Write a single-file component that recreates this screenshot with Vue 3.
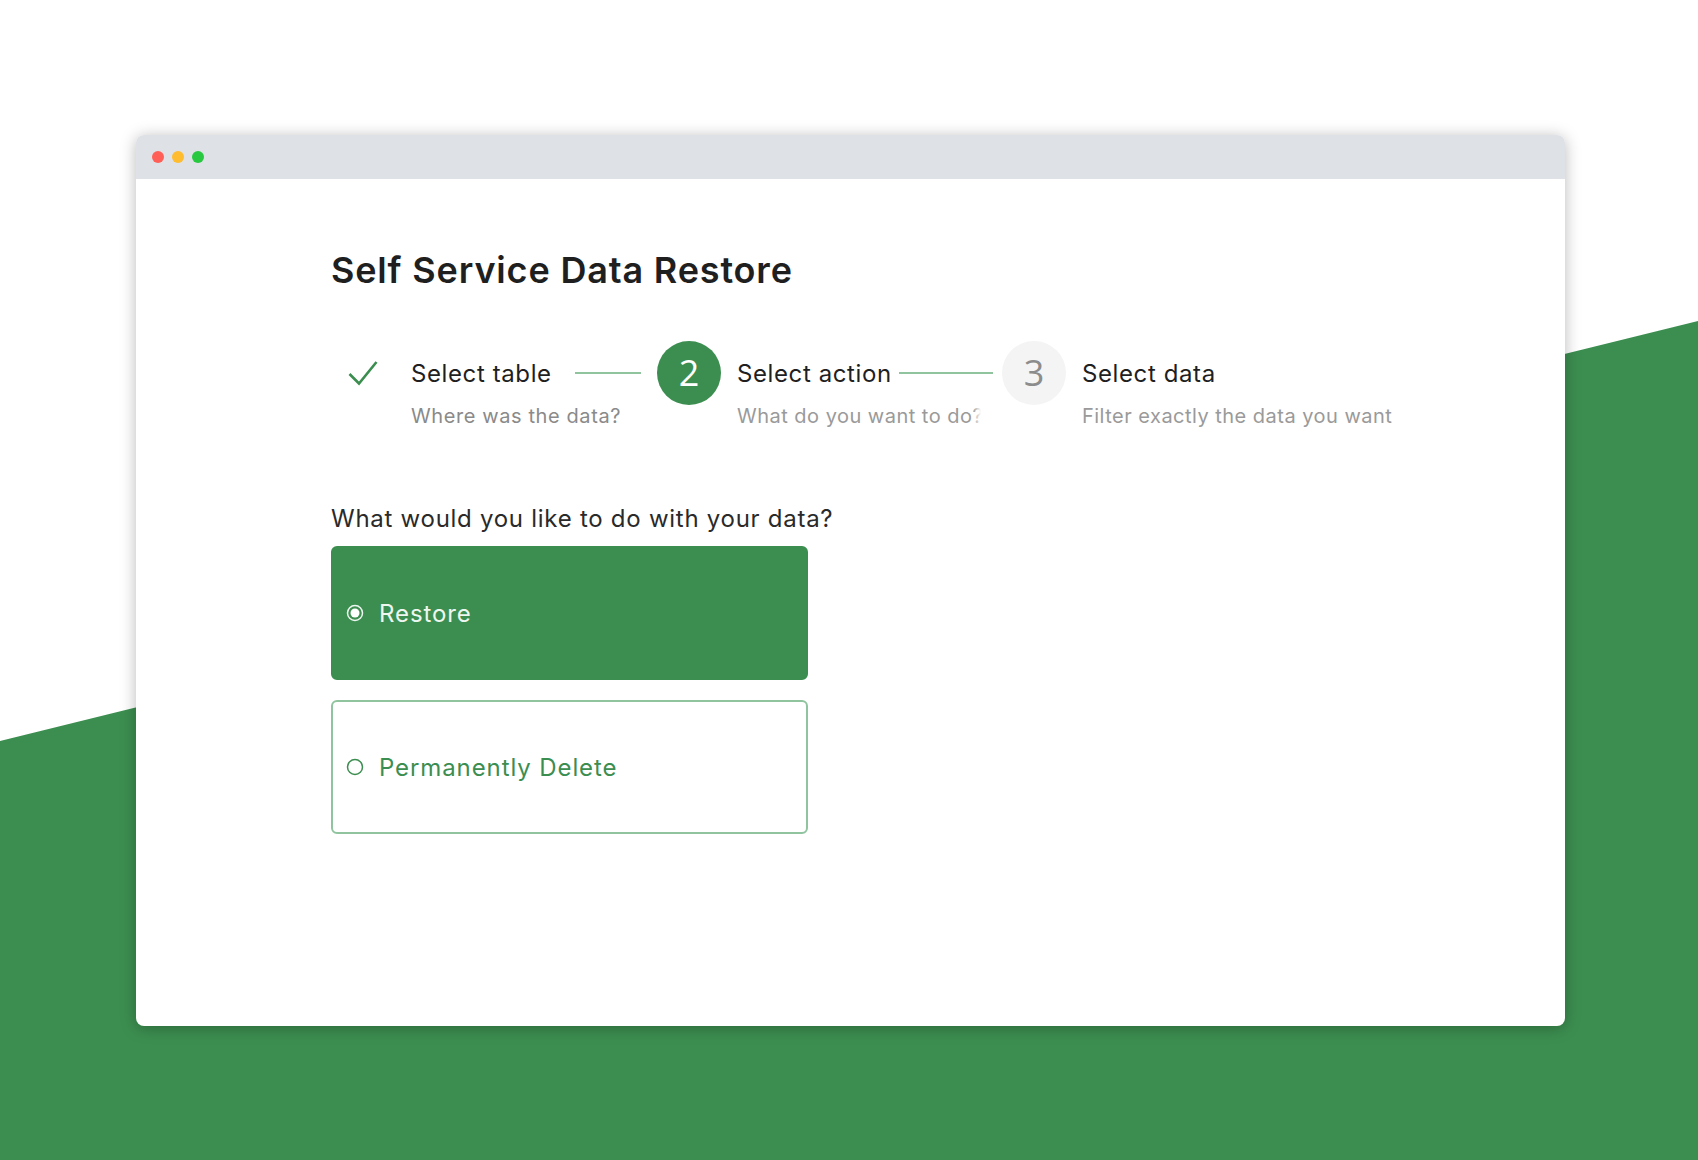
<template>
  <div class="page">
    <div class="bg-shape"></div>

    <div class="window">
      <div class="titlebar">
        <span class="dot red"></span>
        <span class="dot yellow"></span>
        <span class="dot green"></span>
      </div>

      <div class="content">
        <h1 class="title">Self Service Data Restore</h1>

        <div class="steps">
          <div v-for="step in steps" :key="step.title" class="step" :class="step.cls">
            <div class="step-icon">
              <svg v-if="step.done" width="30" height="26" viewBox="0 0 30 26" fill="none">
                <path d="M1.5 14L11 23.5L28.5 2" stroke="#3c8e50" stroke-width="2.6" />
              </svg>
              <span v-else class="step-num">{{ step.num }}</span>
            </div>
            <div class="step-body">
              <div class="step-head">
                <span class="step-title">{{ step.title }}</span>
                <span v-if="step.line" class="step-line"></span>
              </div>
              <div class="step-sub">{{ step.sub }}</div>
            </div>
          </div>
        </div>

        <p class="question">What would you like to do with your data?</p>

        <div class="options">
          <label
            v-for="opt in options"
            :key="opt.value"
            class="option"
            :class="{ selected: selected === opt.value }"
            @click="selected = opt.value"
          >
            <svg class="radio" width="18" height="18" viewBox="0 0 18 18" fill="none">
              <circle cx="9" cy="9" r="7.5" stroke="currentColor" stroke-width="1.5" />
              <circle v-if="selected === opt.value" cx="9" cy="9" r="4.5" fill="#fff" />
            </svg>
            <span class="option-label">{{ opt.label }}</span>
          </label>
        </div>
      </div>
    </div>
  </div>
</template>

<script setup>
import { ref } from "vue";

const steps = [
  { cls: "is-done", done: true, title: "Select table", sub: "Where was the data?", line: true },
  { cls: "is-active", num: 2, title: "Select action", sub: "What do you want to do?", line: true },
  { cls: "is-todo", num: 3, title: "Select data", sub: "Filter exactly the data you want", line: false },
];

const options = [
  { value: "restore", label: "Restore" },
  { value: "delete", label: "Permanently Delete" },
];

const selected = ref("restore");
</script>

<style scoped>
.page {
  position: relative;
  width: 1698px;
  height: 1160px;
  padding: 135px 133px 0 136px;
  box-sizing: border-box;
  overflow: hidden;
  background: #fff;
  font-family: Inter, "Liberation Sans", sans-serif;
}

/* green slanted background */
.bg-shape {
  position: absolute;
  inset: 0;
  background: #3c8e50;
  clip-path: polygon(0 741px, 100% 321px, 100% 100%, 0 100%);
}

.window {
  position: relative;
  height: 891px;
  border-radius: 8px;
  background: #fff;
  box-shadow: 0 2px 16px rgba(0, 0, 0, 0.28);
  overflow: hidden;
}

.titlebar {
  display: flex;
  align-items: center;
  gap: 8px;
  height: 44px;
  padding-left: 16px;
  background: #dee1e6;
}
.dot {
  width: 12px;
  height: 12px;
  border-radius: 50%;
}
.red { background: #ff5f57; }
.yellow { background: #febc2e; }
.green { background: #28c840; }

.content {
  padding: 68px 0 0 195px;
}

.title {
  margin: 0;
  font-size: 36px;
  line-height: 46px;
  font-weight: 600;
  color: #1f1f1f;
  letter-spacing: 0.83px;
}

.steps {
  display: flex;
  margin-top: 48px;
}
.step {
  display: flex;
  gap: 16px;
}
.is-done { width: 326px; }
.is-active { width: 345px; }

.step-icon {
  display: flex;
  align-items: center;
  justify-content: center;
  flex: none;
  width: 64px;
  height: 64px;
  border-radius: 50%;
}
.is-active .step-icon { background: #3c8e50; color: #fff; }
.is-todo .step-icon { background: #f4f4f4; color: #8c8c8c; }

.step-num {
  font-family: "Open Sans", sans-serif;
  font-size: 36px;
  font-weight: 400;
  line-height: 1;
}

.step-body {
  flex: 1;
  min-width: 0;
}
.step-head {
  display: flex;
  align-items: center;
  height: 64px;
}
.step-title {
  flex: none;
  font-size: 24px;
  color: #1f1f1f;
  letter-spacing: 0.6px;
}
.is-done .step-title { width: 164px; }
.is-active .step-title { width: 162px; }
.step-line {
  flex: 1;
  height: 2px;
  margin-top: -1px;
  background: #8fc49f;
}
.is-done .step-line { margin-right: 16px; }
.is-active .step-line { margin-right: 9px; }
.step-sub {
  position: relative;
  margin-top: -2px;
  font-size: 20px;
  line-height: 26px;
  color: #9a9a9a;
  letter-spacing: 0.48px;
  white-space: nowrap;
  overflow: hidden;
}
.is-done .step-sub { color: #8a8a8a; letter-spacing: 0.6px; }
.is-active .step-sub { width: 244px; }
.is-active .step-sub::after {
  content: "";
  position: absolute;
  top: 0;
  right: 0;
  width: 8px;
  height: 100%;
  background: linear-gradient(to right, rgba(255, 255, 255, 0), #fff);
}

.question {
  margin: 75px 0 0;
  font-size: 24px;
  line-height: 30px;
  color: #2a2a2a;
  letter-spacing: 0.73px;
}

.options {
  display: flex;
  flex-direction: column;
  gap: 20px;
  width: 477px;
  margin-top: 12px;
}
.option {
  display: flex;
  align-items: center;
  gap: 15px;
  height: 134px;
  padding-left: 13px;
  box-sizing: border-box;
  border: 2px solid #8fc49f;
  border-radius: 6px;
  color: #3c8e50;
  font-size: 24px;
  letter-spacing: 0.9px;
}
.option.selected {
  background: #3c8e50;
  border-color: #3c8e50;
  color: #eef6f0;
}

.radio {
  flex: none;
}
</style>
